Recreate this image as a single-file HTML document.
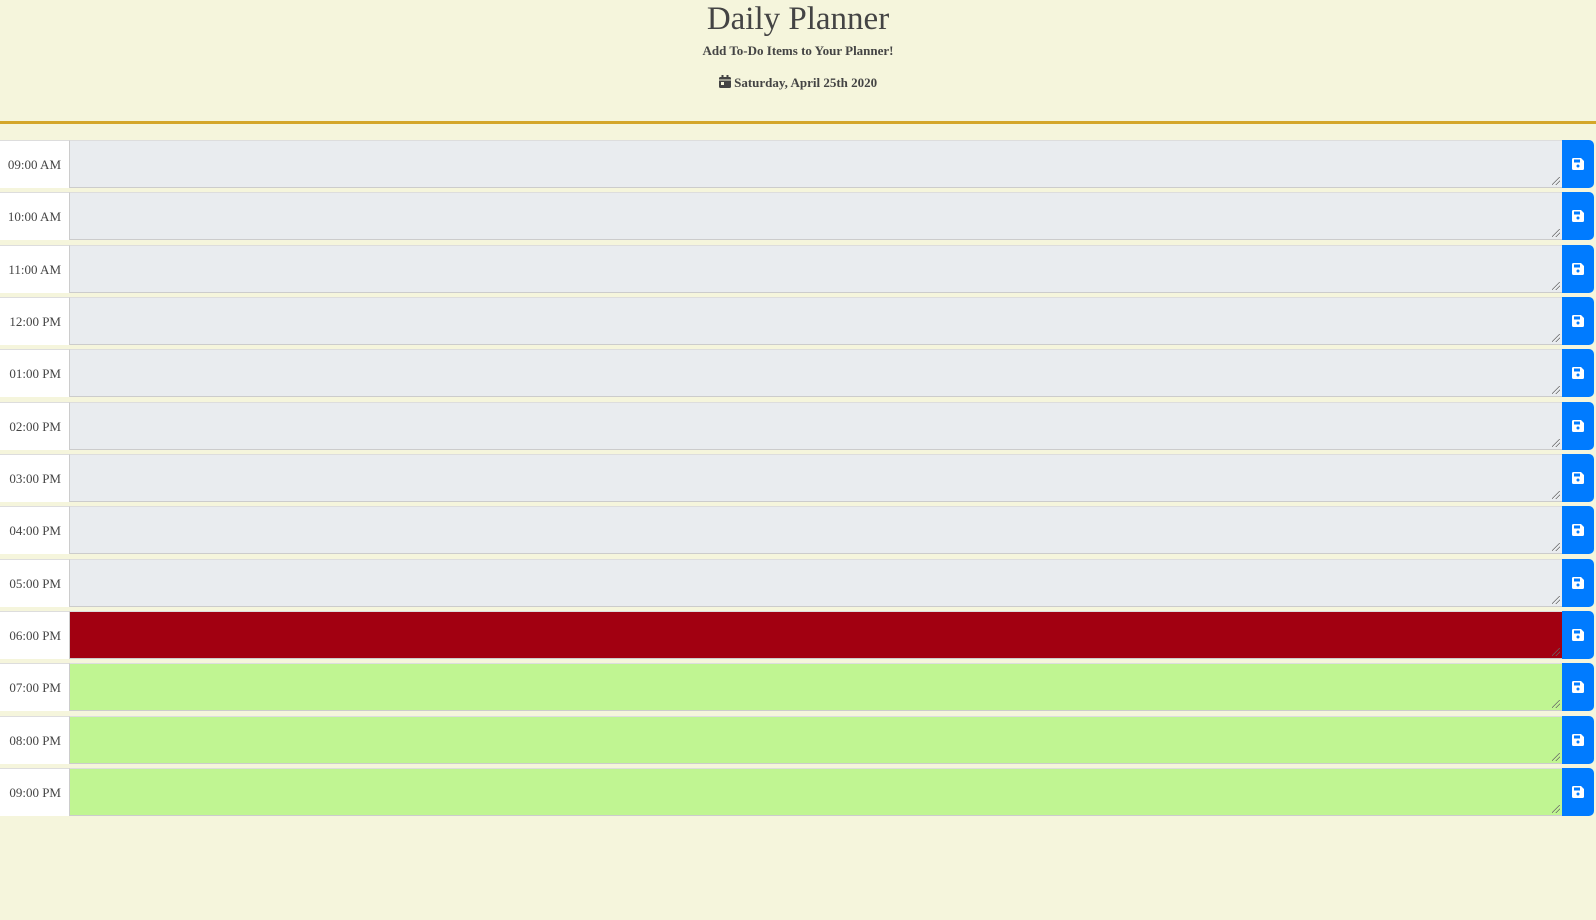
<!DOCTYPE html>
<html><head><meta charset="utf-8"><style>
body{margin:0;background:#f5f5dc;font-family:"Liberation Serif",serif;color:#444;width:1596px;height:920px;overflow:hidden;position:relative}
.hdr{position:absolute;left:0;top:0;width:1596px;height:121px;border-bottom:3px solid #d4a62a;text-align:center}
h1{position:absolute;left:0;right:0;top:0;margin:0;font-weight:400;font-size:33px;line-height:38px}
.sub{position:absolute;left:0;right:0;top:43px;font-weight:700;font-size:13px;line-height:16px}
.date{position:absolute;left:0;right:0;top:75px;font-weight:700;font-size:13px;line-height:16px}
.row{position:absolute;left:0;height:48px;width:1594px}
.t{position:absolute;left:0;top:0;width:69px;height:47px;background:#fff;border-top:1px solid #ddd;border-right:1px solid #ccc;font-size:13px;line-height:47px;text-align:right;box-sizing:content-box}
.t span{position:absolute;right:8px}
.ta{position:absolute;left:70px;top:0;width:1492px;height:46px;border-top:1px solid #ddd;border-bottom:1px solid #ccc}
.past{background:#e9ecef}.now{background:#a20011}.fut{background:#c0f592}
.ta:after{content:"";position:absolute;right:2px;bottom:2px;width:8px;height:8px;background:linear-gradient(135deg,transparent 45%,#666 46%,#666 52%,transparent 53%,transparent 70%,#666 71%,#666 77%,transparent 78%)}
.b{position:absolute;left:1562px;top:0;width:32px;height:48px;background:#007bff;border-radius:0 5px 5px 0}
.b svg{position:absolute;left:10px;top:18px}
</style></head><body>
<div class="hdr">
<h1>Daily Planner</h1>
<div class="sub">Add To-Do Items to Your Planner!</div>
<div class="date"><svg width="12" height="13" viewBox="0 0 12 13" style="vertical-align:-1px"><rect x="0" y="2" width="12" height="11" rx="1.5" fill="#444"/><rect x="2.5" y="0" width="2" height="3" fill="#444"/><rect x="7.5" y="0" width="2" height="3" fill="#444"/><rect x="0" y="4.5" width="12" height="1" fill="#f5f5dc"/><rect x="2" y="7" width="3" height="3" fill="#f5f5dc"/></svg> Saturday, April 25th 2020</div>
</div>
<div id="rows"></div>
<script>
var times=["09:00 AM","10:00 AM","11:00 AM","12:00 PM","01:00 PM","02:00 PM","03:00 PM","04:00 PM","05:00 PM","06:00 PM","07:00 PM","08:00 PM","09:00 PM"];
var h="";
for(var i=0;i<13;i++){var c=i<9?"past":(i==9?"now":"fut");var ty=Math.round(140+i*52.33);
h+='<div class="row" style="top:'+ty+'px"><div class="t"><span>'+times[i]+'</span></div><div class="ta '+c+'"></div><div class="b"><svg width="12" height="12" viewBox="0 0 12 12"><path d="M1.5 0h7.5l3 3v7.5a1.5 1.5 0 0 1-1.5 1.5h-9A1.5 1.5 0 0 1 0 10.5v-9A1.5 1.5 0 0 1 1.5 0z" fill="#fff"/><rect x="2" y="1.5" width="6" height="3" fill="#007bff"/><circle cx="6" cy="8" r="1.5" fill="#007bff"/></svg></div></div>';}
document.getElementById("rows").innerHTML=h;
</script>
</body></html>
